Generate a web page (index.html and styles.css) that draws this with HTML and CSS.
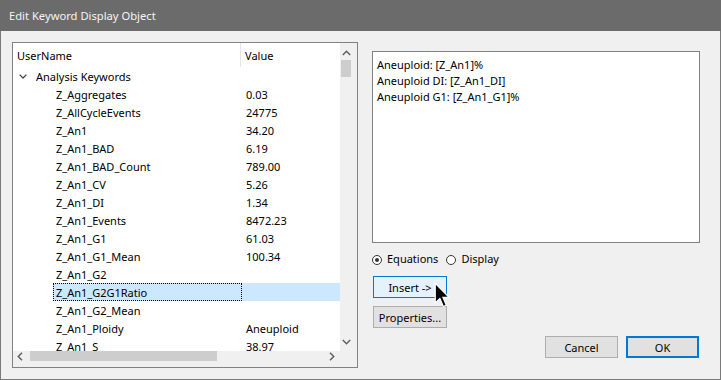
FILE: index.html
```html
<!DOCTYPE html>
<html lang="en">
<head>
<meta charset="utf-8">
<title>Edit Keyword Display Object</title>
<link rel="stylesheet" href="styles.css">
</head>
<body>
<div class="window">
  <div class="titlebar">Edit Keyword Display Object</div>
  <div class="client">
    <div class="tree-panel">
      <div class="tree-content">
        <div class="tree-header">
          <div class="col-name">UserName</div>
          <div class="col-value">Value</div>
        </div>
        <div class="tree-rows">
          <div class="row group">
            <svg class="chev" width="8" height="5" viewBox="0 0 8 5"><path d="M0.6 0.6 L4 4 L7.4 0.6" fill="none" stroke="#444" stroke-width="1.3"/></svg>
            <span class="label">Analysis Keywords</span>
          </div>
          <div class="row item"><div class="name">Z_Aggregates</div><div class="value">0.03</div></div>
          <div class="row item"><div class="name">Z_AllCycleEvents</div><div class="value">24775</div></div>
          <div class="row item"><div class="name">Z_An1</div><div class="value">34.20</div></div>
          <div class="row item"><div class="name">Z_An1_BAD</div><div class="value">6.19</div></div>
          <div class="row item"><div class="name">Z_An1_BAD_Count</div><div class="value">789.00</div></div>
          <div class="row item"><div class="name">Z_An1_CV</div><div class="value">5.26</div></div>
          <div class="row item"><div class="name">Z_An1_DI</div><div class="value">1.34</div></div>
          <div class="row item"><div class="name">Z_An1_Events</div><div class="value">8472.23</div></div>
          <div class="row item"><div class="name">Z_An1_G1</div><div class="value">61.03</div></div>
          <div class="row item"><div class="name">Z_An1_G1_Mean</div><div class="value">100.34</div></div>
          <div class="row item"><div class="name">Z_An1_G2</div><div class="value"></div></div>
          <div class="row item selected"><div class="name focus">Z_An1_G2G1Ratio</div><div class="value"></div></div>
          <div class="row item"><div class="name">Z_An1_G2_Mean</div><div class="value"></div></div>
          <div class="row item"><div class="name">Z_An1_Ploidy</div><div class="value">Aneuploid</div></div>
          <div class="row item"><div class="name">Z_An1_S</div><div class="value">38.97</div></div>
        </div>
      </div>
      <div class="vscroll">
        <svg class="arrow" width="9" height="6" viewBox="0 0 9 6"><path d="M0.8 5 L4.5 1.3 L8.2 5" fill="none" stroke="#606060" stroke-width="1.5"/></svg>
        <div class="vthumb"></div>
        <div class="vspace"></div>
        <svg class="arrow" width="9" height="6" viewBox="0 0 9 6"><path d="M0.8 1 L4.5 4.7 L8.2 1" fill="none" stroke="#606060" stroke-width="1.5"/></svg>
      </div>
      <div class="hscroll">
        <svg class="harrow" width="6" height="9" viewBox="0 0 6 9"><path d="M5 0.8 L1.3 4.5 L5 8.2" fill="none" stroke="#606060" stroke-width="1.5"/></svg>
        <div class="hthumb"></div>
        <div class="hspace"></div>
        <svg class="harrow" width="6" height="9" viewBox="0 0 6 9"><path d="M1 0.8 L4.7 4.5 L1 8.2" fill="none" stroke="#606060" stroke-width="1.5"/></svg>
      </div>
      <div class="corner"></div>
    </div>
    <div class="right">
      <div class="textbox">
        <div>Aneuploid: [Z_An1]%</div>
        <div>Aneuploid DI: [Z_An1_DI]</div>
        <div>Aneuploid G1: [Z_An1_G1]%</div>
      </div>
      <div class="radios">
        <span class="radio checked"></span><span class="radio-label">Equations</span>
        <span class="radio"></span><span class="radio-label">Display</span>
      </div>
      <div class="btn insert">Insert -&gt;</div>
      <div class="btn props">Properties...</div>
      <div class="dialog-buttons">
        <div class="btn">Cancel</div>
        <div class="btn default">OK</div>
      </div>
    </div>
  </div>
  <svg class="cursor" width="16" height="26" viewBox="0 0 13 21"><path d="M1 1 L1 17 L4.8 13.3 L7.6 19.8 L10 18.8 L7.3 12.4 L12.2 12.4 Z" fill="#000" stroke="#fff" stroke-width="1" stroke-linejoin="miter"/></svg>
</div>
</body>
</html>
```

FILE: styles.css
```css
* { box-sizing: border-box; }
html, body { margin: 0; padding: 0; }
body {
  width: 721px;
  height: 380px;
  overflow: hidden;
  font-family: "Noto Sans", "Liberation Sans", sans-serif;
  font-size: 11px;
  color: #000;
  background: #f0f0f0;
}
.window {
  position: relative;
  width: 721px;
  height: 380px;
  background: #f0f0f0;
  border: 1px solid #7a7a7a;
  border-top: none;
  display: flex;
  flex-direction: column;
}
.titlebar {
  height: 31px;
  margin: 0 -1px;
  background: #6b6b6b;
  color: #f4f4f4;
  padding-left: 9px;
  line-height: 31px;
  font-size: 11.2px;
}
.client {
  display: flex;
  padding: 11px 20px 0 11px;
}
.tree-panel {
  width: 346px;
  height: 326px;
  border: 1px solid #828282;
  display: grid;
  grid-template-columns: 327px 17px;
  grid-template-rows: 308px 16px;
  background: #f0f0f0;
}
.tree-content {
  background: #fff;
  overflow: hidden;
}
.tree-header {
  display: flex;
  height: 24px;
  line-height: 25.5px;
}
.col-name {
  width: 228px;
  padding-left: 4px;
  border-right: 1px solid #e5e5e5;
}
.col-value {
  padding-left: 4px;
}
.row {
  height: 18px;
  display: flex;
  align-items: center;
  white-space: nowrap;
}
.row.group { padding-left: 6px; }
.row .label,
.row .name,
.row .value {
  height: 18px;
  line-height: 20px;
}
.chev { margin-right: 9px; }
.row.item { margin-left: 40px; }
.row.item .name {
  width: 189px;
  padding-left: 3px;
}
.row.item .value {
  padding-left: 4px;
  flex: 1;
}
.row.selected { background: #cce8ff; }
.row .name.focus {
  border: 1px dotted #000;
  padding-left: 2px;
  line-height: 18px;
}
.vscroll {
  display: flex;
  flex-direction: column;
  align-items: flex-start;
  padding: 7px 0 6px 1px;
}
.vscroll .arrow { margin-left: 1px; }
.vthumb {
  width: 10px;
  height: 17px;
  margin-top: 4px;
  background: #cdcdcd;
}
.vspace { flex: 1; }
.hscroll {
  display: flex;
  align-items: flex-start;
  padding: 0 5px 0 4px;
}
.harrow { margin-top: 1px; }
.hthumb {
  width: 187px;
  height: 10px;
  margin-left: 7px;
  background: #cdcdcd;
}
.hspace { flex: 1; }
.corner { background: #f0f0f0; }
.right {
  margin-left: 14px;
  padding-top: 9px;
  width: 328px;
  display: flex;
  flex-direction: column;
}
.textbox {
  height: 192px;
  border: 1px solid #828282;
  background: #fff;
  padding: 5px 4px 4px;
  line-height: 16px;
}
.radios {
  margin-top: 9px;
  height: 16px;
  display: flex;
  align-items: center;
}
.radio {
  width: 10px;
  height: 10px;
  border: 1px solid #333;
  border-radius: 50%;
  background: #fff;
  display: flex;
  align-items: center;
  justify-content: center;
}
.radio.checked::after {
  content: "";
  width: 4px;
  height: 4px;
  border-radius: 50%;
  background: #333;
}
.radio-label {
  margin: 0 8px 0 5px;
  line-height: 16px;
  padding-bottom: 2px;
}
.btn {
  height: 22px;
  width: 73px;
  border: 1px solid #adadad;
  background: #e1e1e1;
  text-align: center;
  line-height: 21px;
}
.btn.insert {
  margin: 8px 0 0 1px;
  width: 74px;
  border-color: #0078d7;
  background: #e5f1fb;
}
.btn.props {
  margin: 8px 0 0 1px;
  width: 74px;
}
.dialog-buttons {
  margin-top: 8px;
  display: flex;
  justify-content: flex-end;
  gap: 8px;
  padding-right: 1px;
}
.btn.default {
  border: 2px solid #0078d7;
  line-height: 19px;
}
.cursor {
  position: absolute;
  left: 433px;
  top: 282px;
}
```
